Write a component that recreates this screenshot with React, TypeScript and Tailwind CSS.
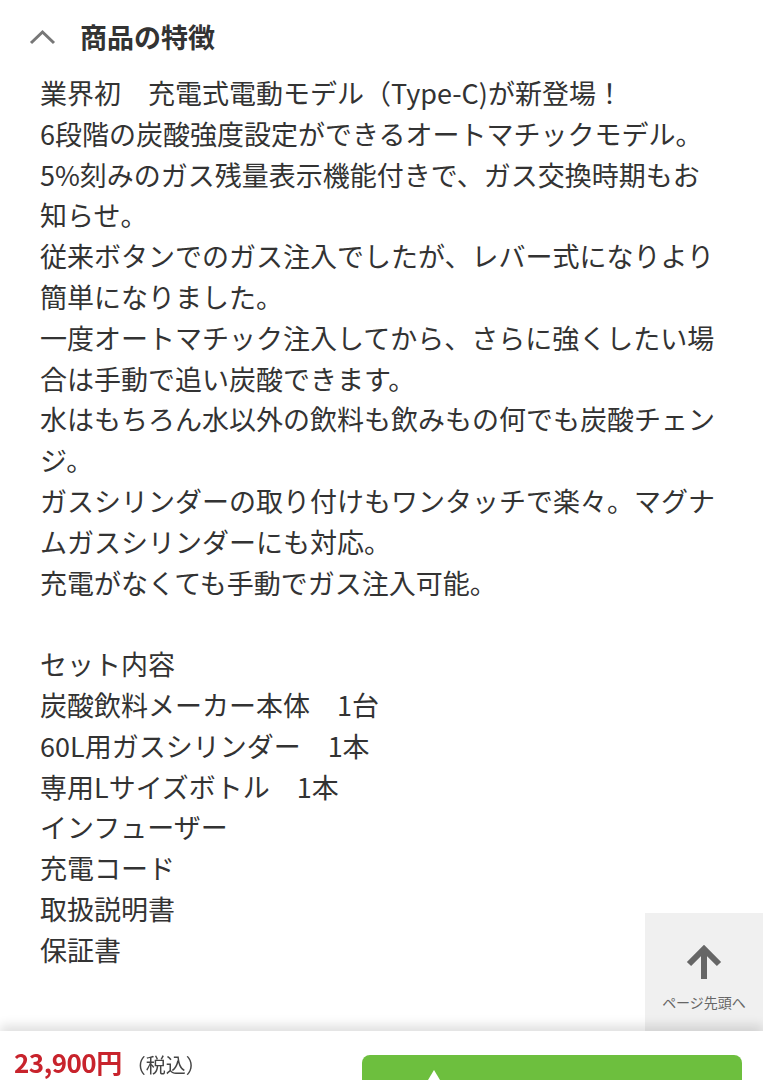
import React from 'react';

const features = [
  '業界初　充電式電動モデル（Type-C)が新登場！',
  '6段階の炭酸強度設定ができるオートマチックモデル。',
  '5%刻みのガス残量表示機能付きで、ガス交換時期もお知らせ。',
  '従来ボタンでのガス注入でしたが、レバー式になりより簡単になりました。',
  '一度オートマチック注入してから、さらに強くしたい場合は手動で追い炭酸できます。',
  '水はもちろん水以外の飲料も飲みもの何でも炭酸チェンジ。',
  'ガスシリンダーの取り付けもワンタッチで楽々。マグナムガスシリンダーにも対応。',
  '充電がなくても手動でガス注入可能。',
];

const setItems = [
  'セット内容',
  '炭酸飲料メーカー本体　1台',
  '60L用ガスシリンダー　1本',
  '専用Lサイズボトル　1本',
  'インフューザー',
  '充電コード',
  '取扱説明書',
  '保証書',
];

function App() {
  return (
    <div className="min-h-[1080px] bg-white text-[#333] font-['Noto_Sans_CJK_JP','Noto_Sans',sans-serif]">
      {/* section header */}
      <header className="flex items-center h-[73px] pl-[29px]">
        <svg className="w-[27px] h-[16px] text-[#777]" viewBox="0 0 27 16" fill="none" stroke="currentColor" strokeWidth={3}>
          <path d="M2 14 L13.5 3 L25 14" />
        </svg>
        <h2 className="ml-[24px] text-[27px] font-bold leading-none">商品の特徴</h2>
      </header>

      <div className="px-[40px] text-[27px] leading-[40.8px]">
        {features.map(line => (
          <p key={line}>{line}</p>
        ))}
        <div className="h-[40.8px]" />
        {setItems.map(line => (
          <p key={line}>{line}</p>
        ))}
        <div className="h-[200px]" />
      </div>

      {/* page top button */}
      <button className="fixed right-0 bottom-[49px] w-[118px] h-[118px] bg-[#f0f0f0] flex flex-col items-center">
        <svg className="mt-[32px] w-[40px] h-[36px] text-[#666]" viewBox="0 0 40 36" fill="none" stroke="currentColor" strokeWidth={6}>
          <path d="M20 34 V5" />
          <path d="M5 19 L20 4 L35 19" />
        </svg>
        <span className="mt-[14px] text-[14px] text-[#666] leading-none">ページ先頭へ</span>
      </button>

      {/* fixed purchase bar */}
      <div className="fixed left-0 right-0 bottom-[-51px] h-[100px] bg-white shadow-[0_-6px_10px_rgba(0,0,0,0.12)] flex items-start">
        <div className="pl-[14px] pt-[18px] flex items-baseline leading-none">
          <span className="text-[26px] font-bold text-[#c8232c] tracking-[-0.5px]">23,900円</span>
          <span className="ml-[4px] text-[20px] text-[#444]">（税込）</span>
        </div>
        <div className="ml-auto mr-[21px] mt-[24px] w-[380px] h-[64px] rounded-[8px] bg-[#6dbf3e] flex items-start pl-[60px] pt-[13px]">
          <svg className="w-[24px] h-[24px] text-white" viewBox="0 0 24 24" fill="currentColor">
            <path d="M12 2 L18 12 H6 Z" />
          </svg>
        </div>
      </div>
    </div>
  );
}

export default App;
